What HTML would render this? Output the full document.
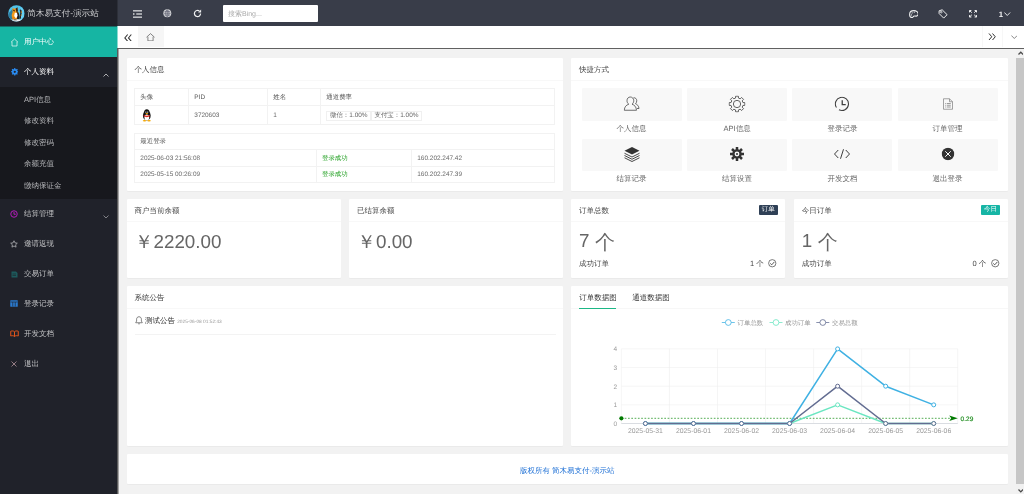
<!DOCTYPE html>
<html lang="zh">
<head>
<meta charset="utf-8">
<title>简木易支付-演示站</title>
<style>
*{box-sizing:border-box;margin:0;padding:0}
html,body{width:1024px;height:494px;overflow:hidden;background:#f2f2f2;font-family:"Liberation Sans",sans-serif;font-size:7.5px;color:#666;text-rendering:geometricPrecision;-webkit-font-smoothing:antialiased}
.abs{position:absolute}
/* header */
#hdr{position:absolute;left:0;top:0;width:1024px;height:26px;background:#393d49}
#logo{position:absolute;left:0;top:0;width:117px;height:26.300px;background:#20222a;color:#cbccce;font-size:8.600px;line-height:27.200px;white-space:nowrap}
#logo span{position:absolute;left:27px;top:0}
#side{position:absolute;left:0;top:26px;width:117px;height:468px;background:#20222a}
.nav{position:absolute;left:0;width:117px;height:30px;line-height:30px;color:#c2c3c5;font-size:7.5px;white-space:nowrap}
.nav b{position:absolute;left:24px;top:0;font-weight:normal}
.nav svg{position:absolute}
.sub{position:absolute;left:24px;color:#b4b5b8;font-size:7.5px;line-height:10px;white-space:nowrap}
#search{position:absolute;left:223px;top:5px;width:95px;height:17px;background:#fff;border-radius:1px;color:#aaa;font-size:7px;line-height:19.400px;padding-left:5px;overflow:hidden}
/* tabs bar */
#tabs{position:absolute;left:117px;top:26px;width:907px;height:22px;background:#fff}
#fb1{position:absolute;left:117px;top:48px;width:907px;height:1px;background:#606060}
#fb2{position:absolute;left:117px;top:48px;width:1px;height:446px;background:#5a5a5a}
#fb3{position:absolute;left:118px;top:49px;width:1px;height:445px;background:#a4a4a4}
#hometab{position:absolute;left:21.250px;top:0;width:25.500px;height:20.500px;background:#f6f6f6}
.hi{position:absolute}
/* cards */
.card{position:absolute;background:#fff;border-radius:1px;box-shadow:0 0.5px 1px rgba(0,0,0,.04)}
.ch{position:absolute;left:0;top:0;right:0;height:22.500px;line-height:24px;padding-left:8px;border-bottom:1px solid #f8f8f8;color:#444;font-size:7.5px;white-space:nowrap}
table{border-collapse:collapse;position:absolute;table-layout:fixed}
td,th{border:1px solid #f2f2f2;font-weight:normal;text-align:left;padding-left:5.300px;color:#6a6a6a;font-size:6.450px;line-height:9px;white-space:nowrap;overflow:hidden}
th{color:#555}
tr.r2 td{padding-top:1.300px}
.big{position:absolute;font-size:18.800px;color:#666;white-space:nowrap;line-height:24px}
.yen{display:inline-block;width:19px;text-align:center}
.ge{font-size:20px;position:relative;top:1.500px;left:0.300px}
.sm{position:absolute;font-size:7.500px;line-height:10px;color:#444;white-space:nowrap}
.qk{position:absolute;width:100px;height:32.300px;background:#f8f8f8;border-radius:1px}
.qi{position:absolute;left:50%;top:calc(50% - 0.400px);transform:translate(-50%,-50%)}
.qt{position:absolute;width:100px;text-align:center;font-size:7.5px;color:#666;line-height:10px;white-space:nowrap}
.tg{display:inline-block;border:1px solid #f0f0f0;height:10px;line-height:8.500px;padding:0 2.700px;font-size:6.450px;color:#666;vertical-align:middle}
.badge{position:absolute;height:10px;line-height:10px;font-size:6.5px;color:#fff;padding:0 3px;border-radius:1px}
</style>
</head>
<body>
<div id="wrap" style="position:absolute;left:0;top:0;width:1024px;height:494px;will-change:transform;opacity:.999">
<div id="hdr">
<svg class="hi" style="left:133px;top:10px" width="9" height="8" viewBox="0 0 18 16" fill="#e8e9ea"><rect x="0" y="0.5" width="18" height="2.4"/><rect x="6.5" y="6.800" width="11.500" height="2.400"/><rect x="0" y="13.100" width="18" height="2.400"/><path d="M0.500 5.500 4 8 0.500 10.500z"/></svg>
<svg class="hi" style="left:163.100px;top:9.450px" width="8.600" height="8.600" viewBox="0 0 16 16"><circle cx="8" cy="8" r="7.400" fill="#d4d5d8"/><g fill="none" stroke="#55596a" stroke-width="1.100"><ellipse cx="8" cy="8" rx="3.200" ry="6.200"/><path d="M1.800 8h12.400M8 1.800v12.400M2.800 4.800h10.400M2.800 11.200h10.400"/></g></svg>
<svg class="hi" style="left:193px;top:9.400px" width="9" height="9" viewBox="0 0 18 18" fill="none" stroke="#eeeff0" stroke-width="2.400"><path d="M15.200 9a6.200 6.200 0 1 1-2.400-4.900"/><path d="M16.300 1v6h-6z" fill="#eeeff0" stroke="none"/></svg>
<svg class="hi" style="left:908.600px;top:10px" width="9.800" height="8.200" viewBox="0 0 19.600 16.400" fill="none" stroke="#eeeff0" stroke-width="2.100"><path d="M9.800 1.300C4.800 1.300 1.200 4.700 1.200 9c0 3.400 2.300 6.100 5.200 6.100 2 0 1.900-1.900 3-2.600 1.500-.900 4 .300 6-.500 1.900-.800 3-2.200 3-4 0-3.800-3.700-6.700-8.600-6.700z"/><circle cx="4.800" cy="9.800" r="1.150" fill="#eeeff0" stroke="none"/><circle cx="6.300" cy="5.800" r="1.150" fill="#eeeff0" stroke="none"/><circle cx="10.500" cy="4.400" r="1.150" fill="#eeeff0" stroke="none"/></svg>
<svg class="hi" style="left:938.300px;top:8.800px" width="10" height="10" viewBox="0 0 20 20" fill="none" stroke="#eeeff0" stroke-width="2" stroke-linejoin="round"><path d="M2.200 3.600 8.400 1.600 18.200 11.400 11.400 18.200 2.200 9z"/><circle cx="6.600" cy="6.200" r="1.700" stroke-width="1.600"/></svg>
<svg class="hi" style="left:969px;top:10px" width="8" height="7.500" viewBox="0 0 16 15" fill="none" stroke="#eeeff0" stroke-width="2"><path d="M1 4.800V1h3.800M11.200 1H15v3.800M15 10.200V14h-3.800M4.800 14H1v-3.800M1.500 1.500l4.200 3.900M14.500 1.500l-4.200 3.900M14.500 13.500l-4.200-3.900M1.500 13.500l4.200-3.900"/></svg>
<div class="hi" style="left:998.800px;top:8.600px;color:#f4f4f5;font-size:7.800px;font-weight:bold;line-height:11px">1</div>
<svg class="hi" style="left:1004.300px;top:11.800px" width="6.500" height="4.200" viewBox="0 0 13 8.400" fill="none" stroke="#eeeff0" stroke-width="1.900"><path d="M0.700 1l5.800 6 5.800-6"/></svg>
</div>
<div id="logo"><svg class="abs" style="left:8.200px;top:5.400px" width="16.800" height="16.800" viewBox="0 0 34 34"><defs><clipPath id="lc"><circle cx="17" cy="17" r="16.600"/></clipPath></defs><g clip-path="url(#lc)"><rect width="34" height="34" fill="#4fc3ec"/><path d="M0 36V18L9 8l4 3 2 25z" fill="#2f7fa3"/><path d="M26 4l6 6v14l-6 6z" fill="#6ad0f2"/><path d="M25.500 9c2.500 1 3 5 2 8.500s-1.500 7-1 10l-3 .500c-.500-4 .500-7 1-10s.200-6-1-8z" fill="#2a2422"/><path d="M26.500 12.500l1.500 .500-.500 3-1.500-.500zM26 19l1.500 .300-.500 3-1.300-.300z" fill="#f08c16"/><ellipse cx="15" cy="21.500" rx="7.500" ry="9.500" fill="#f39a1a"/><path d="M18.500 13c4 2 5.500 8 4.500 16h-5z" fill="#26201f"/><path d="M9.500 4.500l2.200 3.200c1.400-.600 3.400-.600 4.800 0L19 4.500l1 6.500c0 3.500-2.500 5.500-5.500 5.500S9 14.500 9 11z" fill="#f39a1a"/><path d="M15.500 7.500 19 4.500l1 6.500c0 2-1 3.800-2.500 4.700z" fill="#2a2422"/><path d="M10 10.500c1.500-1 3-1 4 .500l-1 2.500z" fill="#3a2a20"/><ellipse cx="16" cy="21" rx="3.200" ry="5.600" fill="#fff"/><path d="M9 24c-1 3 0 6 3 7h4l-2-6z" fill="#e88612"/><ellipse cx="17" cy="33" rx="15" ry="4.200" fill="#ecf0f2"/><path d="M12 29.500h5l1 1.500h-7z" fill="#26201f"/></g></svg><span style="left:27.200px">简木易支付-演示站</span></div>
<div id="side">
<div class="nav" style="top:0.400px;height:30.600px;line-height:32.400px;background:#16b5a3;color:#fff"><svg style="left:10px;top:11.5px" width="9" height="9" viewBox="0 0 18 18" fill="none" stroke="#d9f5f1" stroke-width="1.6" stroke-linejoin="round"><path d="M2 8.5 9 2l7 6.5M4 7.5V16h10V7.5"/></svg><b>用户中心</b></div>
<div class="nav" style="top:31px;height:29px;line-height:29px;color:#fff"><svg style="left:10.5px;top:11px" width="7.5" height="7.5" viewBox="0 0 16 16"><circle cx="8" cy="8" r="6" fill="#2a8bf0"/><g stroke="#2a8bf0" stroke-width="2.6"><path d="M8 0v16M0 8h16M2.3 2.3l11.4 11.4M13.7 2.3 2.3 13.7"/></g><circle cx="8" cy="8" r="2.4" fill="#20222a"/></svg><b>个人资料</b><svg style="left:103px;top:15.5px" width="6" height="4" viewBox="0 0 12 8" fill="none" stroke="#d0d1d3" stroke-width="1.6"><path d="M1 7l5-5 5 5"/></svg></div>
<div style="position:absolute;left:0;top:60.5px;width:117px;height:112px;background:#17181d"></div>
<div class="sub" style="top:68.5px">API信息</div>
<div class="sub" style="top:90px">修改资料</div>
<div class="sub" style="top:111.5px">修改密码</div>
<div class="sub" style="top:133px">余额充值</div>
<div class="sub" style="top:154.5px">缴纳保证金</div>
<div class="nav" style="top:172.5px"><svg style="left:10px;top:11px" width="8" height="8" viewBox="0 0 16 16" fill="none" stroke="#b21cb8" stroke-width="2"><circle cx="8" cy="8" r="6.5"/><path d="M8 4v4.5h3.5"/></svg><b>结算管理</b><svg style="left:103px;top:16px" width="6" height="4" viewBox="0 0 12 8" fill="none" stroke="#9a9b9f" stroke-width="1.6"><path d="M1 1l5 5 5-5"/></svg></div>
<div class="nav" style="top:202.5px"><svg style="left:10px;top:11px" width="8" height="8" viewBox="0 0 16 16" fill="none" stroke="#b8b9bc" stroke-width="1.5" stroke-linejoin="round"><path d="M8 1.5l2 4.3 4.6.6-3.4 3.2.9 4.7L8 12l-4.1 2.3.9-4.700L1.400 6.400 6 5.800z"/></svg><b>邀请返现</b></div>
<div class="nav" style="top:232.5px"><svg style="left:10.5px;top:11px" width="7" height="8" viewBox="0 0 14 16"><path d="M1 3h9l3 3v9H1z" fill="#1d5a5c"/><path d="M3 8h7M3 11h7" stroke="#20222a" stroke-width="1.2"/></svg><b>交易订单</b></div>
<div class="nav" style="top:262.5px"><svg style="left:10px;top:11.500px" width="8" height="7" viewBox="0 0 16 14"><rect x="0.500" y="0.500" width="15" height="13" rx="1" fill="#2a7bd0"/><path d="M5.500 4v9M10.500 4v9M1 4h14" stroke="#20222a" stroke-width="1.300"/></svg><b>登录记录</b></div>
<div class="nav" style="top:292.5px"><svg style="left:9.500px;top:11.500px" width="9" height="7.500" viewBox="0 0 18 15" fill="none" stroke="#e4561b" stroke-width="2"><path d="M9 3.500C7 1.500 4 1.500 1.500 2.500v9.500c2.500-1 5.500-1 7.500 1 2-2 5-2 7.500-1V2.500C14 1.500 11 1.500 9 3.500zM9 3.500v9.500"/></svg><b>开发文档</b></div>
<div class="nav" style="top:322.5px"><svg style="left:11px;top:12px" width="6" height="6" viewBox="0 0 12 12" fill="none" stroke="#b99aa2" stroke-width="1.500"><path d="M1 1l10 10M11 1 1 11"/></svg><b>退出</b></div>
</div>
<div id="search">搜索Bing...</div>
<div id="tabs"><div id="hometab"></div>
<svg class="hi" style="left:6.600px;top:7.700px" width="8.400" height="7.800" viewBox="0 0 16 15" fill="none" stroke="#333" stroke-width="2"><path d="M7 1 1.500 7.500 7 14M14 1 8.500 7.500 14 14"/></svg>
<svg class="hi" style="left:29.100px;top:6.700px" width="9" height="8.500" viewBox="0 0 18 17" fill="none" stroke="#555" stroke-width="1.400" stroke-linejoin="round"><path d="M1 8.500 9 1.200l8 7.300M3.800 7.500V15.800h10.400V7.500"/></svg>
<div class="hi" style="left:864.500px;top:0;width:1px;height:21px;background:#f7f7f7"></div>
<div class="hi" style="left:885px;top:0;width:1px;height:21px;background:#f7f7f7"></div>
<svg class="hi" style="left:870.600px;top:7.400px" width="8" height="7.500" viewBox="0 0 16 15" fill="none" stroke="#333" stroke-width="2"><path d="M2 1l5.500 6.500L2 14M9 1l5.500 6.500L9 14"/></svg>
<svg class="hi" style="left:893.600px;top:9.100px" width="6.600" height="4" viewBox="0 0 13.200 8" fill="none" stroke="#555" stroke-width="1.400"><path d="M0.700 1l5.900 6 5.900-6"/></svg>
</div>

<div class="abs" style="left:117px;top:0;width:1px;height:26px;background:#2d3039"></div><div class="abs" style="left:117px;top:26px;width:1px;height:22px;background:#8bdad1"></div><div class="abs" style="left:0;top:26px;width:117px;height:1px;background:#1b6c67"></div><div id="fb1"></div><div id="fb2"></div><div id="fb3"></div>
<!-- cards -->
<div class="card" id="c1" style="left:126.500px;top:58px;width:436.800px;height:133px"><div class="ch">个人信息</div>
<table style="left:7.500px;top:30px;width:420.500px">
<colgroup><col style="width:54px"><col style="width:79px"><col style="width:53px"><col></colgroup>
<tr style="height:17px"><th>头像</th><th>PID</th><th>姓名</th><th>通道费率</th></tr>
<tr class="r2" style="height:18.800px"><td><svg width="9.600" height="12.600" viewBox="0 0 13 18" style="display:block;margin-left:2.200px"><ellipse cx="6.500" cy="9.500" rx="5.500" ry="7" fill="#111"/><ellipse cx="6.500" cy="5.500" rx="4" ry="5" fill="#111"/><ellipse cx="6.500" cy="12" rx="3.400" ry="4.200" fill="#fff"/><path d="M2 8.500c3 1.500 6 1.500 9 0v2c-3 1.500-6 1.500-9 0z" fill="#e1251b"/><ellipse cx="3.300" cy="16.800" rx="2.600" ry="1.100" fill="#f5a700"/><ellipse cx="9.700" cy="16.800" rx="2.600" ry="1.100" fill="#f5a700"/><ellipse cx="6.500" cy="6.600" rx="1.800" ry="0.800" fill="#f5a700"/><circle cx="5.200" cy="4.300" r="0.900" fill="#fff"/><circle cx="7.800" cy="4.300" r="0.900" fill="#fff"/></svg></td><td>3720603</td><td>1</td><td><span class="tg">微信：1.00%</span><span class="tg" style="margin-left:-0.500px">支付宝：1.00%</span></td></tr>
</table>
<table style="left:7.500px;top:75px;width:420.500px">
<colgroup><col style="width:181.700px"><col style="width:95.300px"><col></colgroup>
<tr style="height:16px"><th colspan="3">最近登录</th></tr>
<tr style="height:17px"><td>2025-06-03 21:56:08</td><td style="color:#23a023">登录成功</td><td>160.202.247.42</td></tr>
<tr style="height:16px"><td>2025-05-15 00:26:09</td><td style="color:#23a023">登录成功</td><td>160.202.247.39</td></tr>
</table>
</div>
<div class="card" id="c2" style="left:571px;top:58px;width:437px;height:133px"><div class="ch">快捷方式</div>
<div class="qk" style="left:10.60px;top:30.40px"><svg class="qi" width="17" height="16" viewBox="0 0 34 32" fill="none" stroke="#4a4a4a" stroke-width="1.600"><path d="M20 3.500c3.500-.500 6.500 2 6.500 6 0 2.500-1 4.500-2.500 6 3.500 1.500 6.500 4 7 9.500h-4"/><path d="M13.500 2c4 0 7 3 7 7.500 0 3-1.500 5.500-3.500 7 5 1.500 8.500 5 9 12H1.500c.500-7 4-10.500 9-12-2-1.500-3.500-4-3.500-7C7 5 9.500 2 13.500 2z" fill="#f8f8f8"/></svg></div><div class="qt" style="left:10.60px;top:66.00px">个人信息</div>
<div class="qk" style="left:116.10px;top:30.40px"><svg class="qi" width="17" height="17" viewBox="0 0 34 34" fill="none" stroke="#484848" stroke-width="1.700" stroke-linejoin="round"><path d="M14.06 5.16L14.37 1.22L19.63 1.22L19.94 5.16L23.29 6.55L26.30 3.98L30.02 7.70L27.45 10.71L28.84 14.06L32.78 14.37L32.78 19.63L28.84 19.94L27.45 23.29L30.02 26.30L26.30 30.02L23.29 27.45L19.94 28.84L19.63 32.78L14.37 32.78L14.06 28.84L10.71 27.45L7.70 30.02L3.98 26.30L6.55 23.29L5.16 19.94L1.22 19.63L1.22 14.37L5.16 14.06L6.55 10.71L3.98 7.70L7.70 3.98L10.71 6.55z"/><circle cx="17" cy="17" r="7.300"/></svg></div><div class="qt" style="left:116.10px;top:66.00px">API信息</div>
<div class="qk" style="left:221.40px;top:30.40px"><svg class="qi" width="15" height="15" viewBox="0 0 32 32" fill="none" stroke="#404040" stroke-width="2.300"><path d="M9.500 28.200A14 14 0 1 0 4.200 23.500"/><path d="M16.500 8v9.500h7.500" stroke-width="2.800"/></svg></div><div class="qt" style="left:221.40px;top:66.00px">登录记录</div>
<div class="qk" style="left:326.60px;top:30.40px"><svg class="qi" width="11" height="12" viewBox="0 0 22 24" fill="none" stroke="#7c7c7c" stroke-width="1.400"><path d="M2 1.500h12l6 6V22.500H2z"/><path d="M14 1.500v6h6"/><path d="M8.500 11h8M8.500 14.500h8M8.500 18h8M5 11h1.500M5 14.500h1.500M5 18h1.500" stroke-width="1.500"/></svg></div><div class="qt" style="left:326.60px;top:66.00px">订单管理</div>
<div class="qk" style="left:10.60px;top:80.70px"><svg class="qi" width="17" height="16" viewBox="0 0 34 32"><path d="M17 2 32 9.500 17 17 2 9.500z" fill="#333"/><g fill="none" stroke="#333" stroke-width="1.800"><path d="M2 14.500 17 22l15-7.500M2 19l15 7.500L32 19M2 23.500 17 31l15-7.500"/></g></svg></div><div class="qt" style="left:10.60px;top:116.30px">结算记录</div>
<div class="qk" style="left:116.10px;top:80.70px"><svg class="qi" width="15" height="15" viewBox="0 0 30 30"><g stroke="#333" stroke-width="5"><path d="M15 1v28M1 15h28M5 5l20 20M25 5 5 25"/></g><circle cx="15" cy="15" r="9.500" fill="#333"/><circle cx="15" cy="15" r="4.800" fill="#f8f8f8"/><circle cx="15" cy="15" r="2" fill="#333"/></svg></div><div class="qt" style="left:116.10px;top:116.30px">结算设置</div>
<div class="qk" style="left:221.40px;top:80.70px"><svg class="qi" width="17" height="11" viewBox="0 0 34 22" fill="none" stroke="#333" stroke-width="1.900"><path d="M9.500 3 2 11l7.500 8M24.500 3 32 11l-7.500 8M20 1.500 14 20.500"/></svg></div><div class="qt" style="left:221.40px;top:116.30px">开发文档</div>
<div class="qk" style="left:326.60px;top:80.70px"><svg class="qi" width="13" height="13" viewBox="0 0 26 26"><circle cx="13" cy="13" r="12.500" fill="#333"/><path d="M7.500 7.500l11 11M18.500 7.500l-11 11" stroke="#f8f8f8" stroke-width="2"/></svg></div><div class="qt" style="left:326.60px;top:116.30px">退出登录</div>
</div>
<div class="card" id="c3" style="left:126.500px;top:199px;width:214.500px;height:79px"><div class="ch">商户当前余额</div><div class="big" style="left:8px;top:30.500px"><span class="yen">￥</span>2220.00</div></div>
<div class="card" id="c4" style="left:349px;top:199px;width:214.300px;height:79px"><div class="ch">已结算余额</div><div class="big" style="left:8px;top:30.500px"><span class="yen">￥</span>0.00</div></div>
<div class="card" id="c5" style="left:571px;top:199px;width:214.300px;height:79px"><div class="ch">订单总数</div><div class="badge" style="right:7.500px;top:6.300px;background:#2f4056">订单</div><div class="big" style="left:8px;top:30px">7 <span class="ge">个</span></div><div class="sm" style="left:8px;top:59.500px">成功订单</div><div class="sm" style="right:21.500px;top:59.500px">1 个</div><svg class="abs" style="right:8.500px;top:60.300px" width="8.500" height="8.500" viewBox="0 0 17 17" fill="none" stroke="#444" stroke-width="1.400"><circle cx="8.500" cy="8.500" r="7.300"/><path d="M4.500 8.800l3 2.800 5.200-5.800" stroke-width="1.800"/></svg></div>
<div class="card" id="c6" style="left:793.800px;top:199px;width:214.500px;height:79px"><div class="ch">今日订单</div><div class="badge" style="right:8.300px;top:6.300px;background:#16b5a5">今日</div><div class="big" style="left:8px;top:30px">1 <span class="ge">个</span></div><div class="sm" style="left:8px;top:59.500px">成功订单</div><div class="sm" style="right:22px;top:59.500px">0 个</div><svg class="abs" style="right:8.500px;top:60.300px" width="8.500" height="8.500" viewBox="0 0 17 17" fill="none" stroke="#444" stroke-width="1.400"><circle cx="8.500" cy="8.500" r="7.300"/><path d="M4.500 8.800l3 2.800 5.200-5.800" stroke-width="1.800"/></svg></div>
<div class="card" id="c7" style="left:126.500px;top:286px;width:436.800px;height:160px"><div class="ch">系统公告</div>
<svg class="abs" style="left:8px;top:30.300px" width="8" height="8.600" viewBox="0 0 16 17.200" fill="none" stroke="#444" stroke-width="1.300" stroke-linejoin="round"><path d="M8 1.500c-3 0-4.800 2.200-4.800 5v3.800L1.500 12.800v.700h13v-.700l-1.700-2.500V6.500c0-2.800-1.800-5-4.800-5z"/><path d="M6.300 15.300c.800 1 2.600 1 3.400 0"/></svg>
<div class="abs" style="left:18.500px;top:29.500px;font-size:7.500px;line-height:10px;color:#333;white-space:nowrap">测试公告</div>
<div class="abs" style="left:50.700px;top:33.600px;font-size:4.800px;line-height:6px;color:#999;white-space:nowrap">2025-06-08 01:52:43</div>
<div class="abs" style="left:8px;top:47.500px;width:421px;height:1px;background:#f3f3f3"></div>
</div>
<div class="card" id="c8" style="left:571px;top:286px;width:437px;height:160px">
<div class="abs" style="left:0;top:0;right:0;height:22.500px;border-bottom:1px solid #f7f7f7"></div>
<div class="abs" style="left:8.300px;top:0;line-height:24.600px;font-size:7.500px;color:#333;white-space:nowrap">订单数据图</div>
<div class="abs" style="left:61.300px;top:0;line-height:24.600px;font-size:7.500px;color:#333;white-space:nowrap">通道数据图</div>
<div class="abs" style="left:8.300px;top:21.600px;width:37.200px;height:1.300px;background:#1cb886"></div>
<svg class="abs" style="left:0;top:0" width="437" height="160" viewBox="0 0 437 160" font-family="Liberation Sans, sans-serif">
<path d="M50.40 137.50H386.75M50.40 118.85H386.75M50.40 100.20H386.75M50.40 81.55H386.75M50.40 62.90H386.75M50.40 62.90V137.50M98.45 62.90V137.50M146.50 62.90V137.50M194.55 62.90V137.50M242.60 62.90V137.50M290.65 62.90V137.50M338.70 62.90V137.50M386.75 62.90V137.50" stroke="#eeeeee" stroke-width="0.600" fill="none"/>
<path d="M50.40 137.50H386.75" stroke="#cfd3da" stroke-width="0.700"/>
<text x="46.10" y="139.80" font-size="6.500" fill="#999" text-anchor="end">0</text>
<text x="46.10" y="121.15" font-size="6.500" fill="#999" text-anchor="end">1</text>
<text x="46.10" y="102.50" font-size="6.500" fill="#999" text-anchor="end">2</text>
<text x="46.10" y="83.85" font-size="6.500" fill="#999" text-anchor="end">3</text>
<text x="46.10" y="65.20" font-size="6.500" fill="#999" text-anchor="end">4</text>
<text x="74.42" y="147.10" font-size="6.850" fill="#999" text-anchor="middle">2025-05-31</text>
<text x="122.47" y="147.10" font-size="6.850" fill="#999" text-anchor="middle">2025-06-01</text>
<text x="170.52" y="147.10" font-size="6.850" fill="#999" text-anchor="middle">2025-06-02</text>
<text x="218.57" y="147.10" font-size="6.850" fill="#999" text-anchor="middle">2025-06-03</text>
<text x="266.62" y="147.10" font-size="6.850" fill="#999" text-anchor="middle">2025-06-04</text>
<text x="314.67" y="147.10" font-size="6.850" fill="#999" text-anchor="middle">2025-06-05</text>
<text x="362.72" y="147.10" font-size="6.850" fill="#999" text-anchor="middle">2025-06-06</text>
<path d="M50.40 132.30H379.00" stroke="#0a8a0a" stroke-width="0.700" stroke-dasharray="1.700 1.600"/>
<circle cx="50.40" cy="132.30" r="2.100" fill="#007a00"/>
<path d="M378.20 129.60L386.80 132.30L378.20 135.00L380.20 132.30z" fill="#007a00"/>
<text x="389.60" y="134.60" font-size="6.500" fill="#1a8a1a" stroke="#1a8a1a" stroke-width="0.150">0.29</text>
<path d="M74.42 137.50L122.47 137.50L170.52 137.50L218.57 137.50L266.62 118.85L314.67 137.50L362.72 137.50" stroke="#6be6c1" stroke-width="1.500" fill="none" stroke-linejoin="round"/>
<path d="M74.42 137.50L122.47 137.50L170.52 137.50L218.57 137.50L266.62 62.90L314.67 100.20L362.72 118.85" stroke="#3fb1e3" stroke-width="1.500" fill="none" stroke-linejoin="round"/>
<path d="M74.42 137.50L122.47 137.50L170.52 137.50L218.57 137.50L266.62 100.20L314.67 137.50L362.72 137.50" stroke="#626c91" stroke-width="1.500" fill="none" stroke-linejoin="round"/>
<circle cx="74.42" cy="137.50" r="2" fill="#fff" stroke="#6be6c1" stroke-width="1"/>
<circle cx="122.47" cy="137.50" r="2" fill="#fff" stroke="#6be6c1" stroke-width="1"/>
<circle cx="170.52" cy="137.50" r="2" fill="#fff" stroke="#6be6c1" stroke-width="1"/>
<circle cx="218.57" cy="137.50" r="2" fill="#fff" stroke="#6be6c1" stroke-width="1"/>
<circle cx="266.62" cy="118.85" r="2" fill="#fff" stroke="#6be6c1" stroke-width="1"/>
<circle cx="314.67" cy="137.50" r="2" fill="#fff" stroke="#6be6c1" stroke-width="1"/>
<circle cx="362.72" cy="137.50" r="2" fill="#fff" stroke="#6be6c1" stroke-width="1"/>
<circle cx="74.42" cy="137.50" r="2" fill="#fff" stroke="#3fb1e3" stroke-width="1"/>
<circle cx="122.47" cy="137.50" r="2" fill="#fff" stroke="#3fb1e3" stroke-width="1"/>
<circle cx="170.52" cy="137.50" r="2" fill="#fff" stroke="#3fb1e3" stroke-width="1"/>
<circle cx="218.57" cy="137.50" r="2" fill="#fff" stroke="#3fb1e3" stroke-width="1"/>
<circle cx="266.62" cy="62.90" r="2" fill="#fff" stroke="#3fb1e3" stroke-width="1"/>
<circle cx="314.67" cy="100.20" r="2" fill="#fff" stroke="#3fb1e3" stroke-width="1"/>
<circle cx="362.72" cy="118.85" r="2" fill="#fff" stroke="#3fb1e3" stroke-width="1"/>
<circle cx="74.42" cy="137.50" r="2" fill="#fff" stroke="#626c91" stroke-width="1"/>
<circle cx="122.47" cy="137.50" r="2" fill="#fff" stroke="#626c91" stroke-width="1"/>
<circle cx="170.52" cy="137.50" r="2" fill="#fff" stroke="#626c91" stroke-width="1"/>
<circle cx="218.57" cy="137.50" r="2" fill="#fff" stroke="#626c91" stroke-width="1"/>
<circle cx="266.62" cy="100.20" r="2" fill="#fff" stroke="#626c91" stroke-width="1"/>
<circle cx="314.67" cy="137.50" r="2" fill="#fff" stroke="#626c91" stroke-width="1"/>
<circle cx="362.72" cy="137.50" r="2" fill="#fff" stroke="#626c91" stroke-width="1"/>
<path d="M150.80 36.50h13" stroke="#3fb1e3" stroke-width="0.750"/>
<circle cx="157.30" cy="36.50" r="2.900" fill="#fff" stroke="#3fb1e3" stroke-width="0.800"/>
<text x="166.60" y="38.90" font-size="6.400" fill="#999">订单总数</text>
<path d="M198.50 36.50h13" stroke="#6be6c1" stroke-width="0.750"/>
<circle cx="205.00" cy="36.50" r="2.900" fill="#fff" stroke="#6be6c1" stroke-width="0.800"/>
<text x="214.00" y="38.90" font-size="6.400" fill="#999">成功订单</text>
<path d="M245.30 36.50h13" stroke="#626c91" stroke-width="0.750"/>
<circle cx="251.80" cy="36.50" r="2.900" fill="#fff" stroke="#626c91" stroke-width="0.800"/>
<text x="261.00" y="38.90" font-size="6.400" fill="#999">交易总额</text>
</svg>
</div>
<div class="card" id="c9" style="left:126.500px;top:454px;width:881.500px;height:29.500px"><div class="abs" style="left:0;right:0;top:11.500px;text-align:center;font-size:7.500px;line-height:10px;color:#2172d6;white-space:nowrap">版权所有 简木易支付-演示站</div></div>
<div class="abs" style="left:1016px;top:49px;width:8px;height:445px;background:#f1f1f1"></div>
<div class="abs" style="left:1016px;top:58.200px;width:8px;height:425.600px;background:#c6c6c6"></div>
<svg class="abs" style="left:1017.600px;top:51.300px" width="5.600" height="4" viewBox="0 0 11.200 8" fill="none" stroke="#4a4a4a" stroke-width="2.600"><path d="M1 7l4.600-4.800L10.200 7"/></svg>
<svg class="abs" style="left:1017.600px;top:488.600px" width="5.600" height="4" viewBox="0 0 11.200 8" fill="none" stroke="#4a4a4a" stroke-width="2.600"><path d="M1 1l4.600 4.800L10.200 1"/></svg>
</div>
</body>
</html>
